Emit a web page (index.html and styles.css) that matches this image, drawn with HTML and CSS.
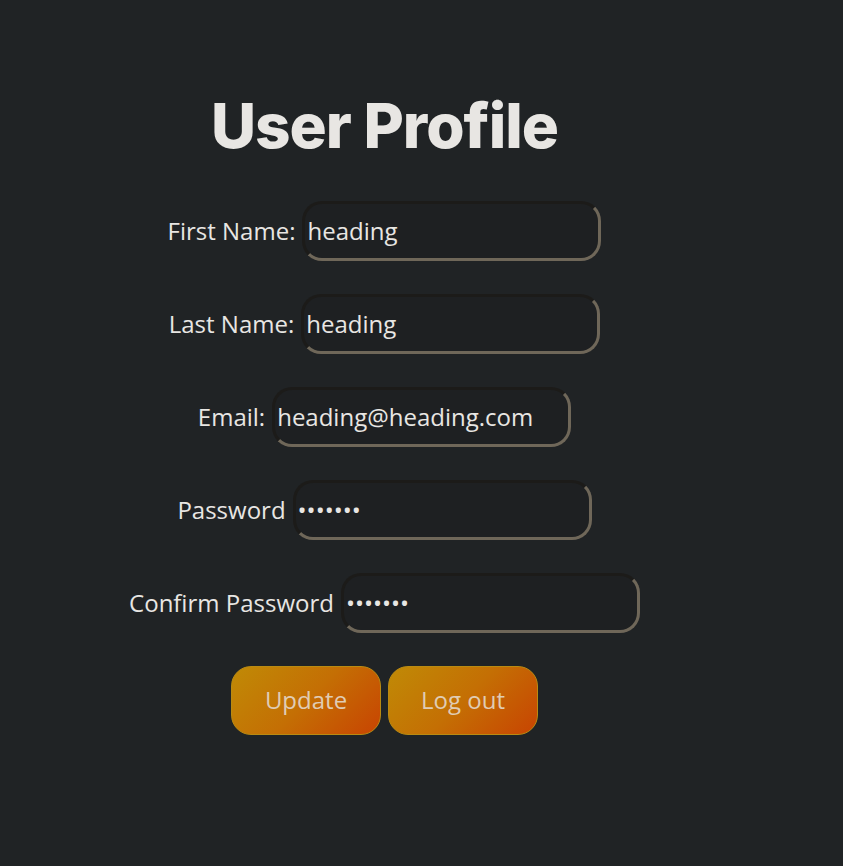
FILE: index.html
```html
<!DOCTYPE html>
<html lang="en">
<head>
<meta charset="utf-8">
<title>User Profile</title>
<link rel="stylesheet" href="styles.css">
</head>
<body>
<main class="profile">
  <h1 class="title">User Profile</h1>
  <form class="form">
    <div class="row"><label>First Name:</label><input class="field" type="text" value="heading"></div>
    <div class="row"><label>Last Name:</label><input class="field" type="text" value="heading"></div>
    <div class="row"><label>Email:</label><input class="field" type="text" value="heading@heading.com"></div>
    <div class="row"><label>Password</label><input class="field" type="password" value="1234567"></div>
    <div class="row"><label>Confirm Password</label><input class="field" type="password" value="1234567"></div>
    <div class="row buttons"><button type="button" class="btn">Update</button><button type="button" class="btn">Log out</button></div>
  </form>
</main>
</body>
</html>
```

FILE: styles.css
```css
html, body {
  margin: 0;
  padding: 0;
  background: #202325;
  height: 100%;
}
body {
  font-family: "Open Sans", "Liberation Sans", sans-serif;
  color: #e8e6e3;
}
.profile {
  width: 769px;
  text-align: center;
  padding-top: 84px;
}
.title {
  font-family: Inter, "Liberation Sans", sans-serif;
  font-weight: 800;
  font-size: 62px;
  letter-spacing: -1px;
  line-height: 84px;
  margin: 0 0 33px;
  color: #e8e6e3;
}
.form {
  margin: 0;
}
.row {
  display: flex;
  justify-content: center;
  align-items: baseline;
  gap: 7px;
  font-size: 24px;
  margin-bottom: 33px;
}
.row label {
  color: #e8e6e3;
}
.field {
  box-sizing: border-box;
  width: 299px;
  height: 60px;
  font-family: "Open Sans", "Liberation Sans", sans-serif;
  font-size: 24px;
  color: #e8e6e3;
  background: #1e2022;
  border: 3px solid;
  border-color: #1c1b19 #6f6759 #6f6759 #1c1b19;
  border-radius: 20px;
  padding: 0 2px 2px;
  outline: none;
}
.buttons {
  align-items: center;
}
.btn {
  box-sizing: border-box;
  width: 150px;
  height: 69px;
  font-family: "Open Sans", "Liberation Sans", sans-serif;
  font-size: 24px;
  color: #e0ccb4;
  background: linear-gradient(135deg, #c08a06 0%, #c46f04 50%, #c84402 100%);
  border: 1px solid #b98a12;
  border-radius: 20px;
  padding: 0 0 2px;
  cursor: pointer;
}
```
